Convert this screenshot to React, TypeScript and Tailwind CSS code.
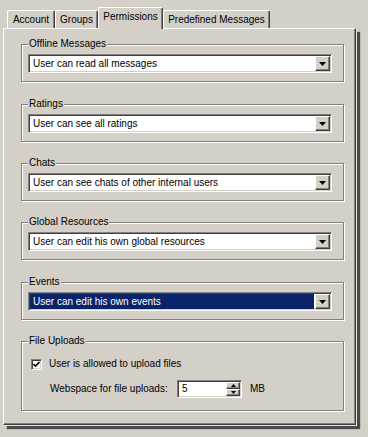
import React from 'react';

const GROUPS = [
  { title: 'Offline Messages', value: 'User can read all messages', gap: 'mt-0' },
  { title: 'Ratings', value: 'User can see all ratings', gap: 'mt-[16px]' },
  { title: 'Chats', value: 'User can see chats of other internal users', gap: 'mt-[15px]' },
  { title: 'Global Resources', value: 'User can edit his own global resources', gap: 'mt-[15px]' },
  { title: 'Events', value: 'User can edit his own events', gap: 'mt-[16px]', selected: true },
];

const raised = 'border border-t-white border-l-white border-r-[#404040] border-b-[#404040] shadow-[inset_-1px_-1px_0_#808080]';
const sunken = 'border border-t-[#808080] border-l-[#808080] border-r-white border-b-white shadow-[inset_1px_1px_0_#404040,inset_-1px_-1px_0_#d4d0c8]';

function Tab({ label, width, active }: { label: string; width: string; active?: boolean }) {
  if (active) {
    return (
      <div className={`${width} h-[22px] -mb-[1px] relative z-10 bg-[#d4d0c8] border-t border-l border-t-white border-l-white border-r border-r-[#404040] shadow-[inset_-1px_0_0_#808080] rounded-t-[2px] flex justify-center pt-[3px]`}>
        {label}
      </div>
    );
  }
  return (
    <div className={`${width} h-[18px] border-t border-l border-t-white border-l-white border-r border-r-[#404040] shadow-[inset_-1px_0_0_#808080] rounded-t-[2px] flex justify-center pt-[3px]`}>
      {label}
    </div>
  );
}

function Combo({ value, selected }: { value: string; selected?: boolean }) {
  return (
    <div className={`h-[19px] bg-white flex p-[1px] ${sunken}`}>
      <div className={`flex-1 flex items-center pl-[3px] mr-[1px] ${selected ? 'bg-[#0a246a] text-white' : ''}`}>{value}</div>
      <div className={`w-[15px] h-[15px] bg-[#d4d0c8] flex items-center justify-center ${raised}`}>
        <svg width="7" height="4" viewBox="0 0 7 4"><path d="M0 0h7L3.5 4z" fill="#000" /></svg>
      </div>
    </div>
  );
}

function Group({ title, gap, children, tall }: { title: string; gap: string; children: React.ReactNode; tall?: boolean }) {
  return (
    <fieldset className={`${gap} border border-[#808080] shadow-[inset_1px_1px_0_#fff,1px_1px_0_#fff] pl-[6px] pr-[11px] pt-[4px] ${tall ? 'pb-[12px]' : 'pb-[8px]'}`}>
      <legend className="px-[1px] bg-[#d4d0c8] leading-[12px]">{title}</legend>
      {children}
    </fieldset>
  );
}

export default function App() {
  return (
    <div className="w-[368px] h-[437px] bg-[#d4d0c8] pt-[7px] pl-[3px] text-[10px] leading-[12px] text-black" style={{ fontFamily: '"Liberation Sans", Arial, sans-serif' }}>
      <div className="flex items-end h-[21px] pl-[4px]">
        <Tab label="Account" width="w-[48px]" />
        <Tab label="Groups" width="w-[43px]" />
        <Tab label="Permissions" width="w-[65px]" active />
        <Tab label="Predefined Messages" width="w-[107px]" />
      </div>
      <div className="w-[353px] h-[397px] border border-t-white border-l-white border-r-[#404040] border-b-[#404040] shadow-[inset_-1px_-1px_0_#808080,1px_1px_0_#e4e2dc,4px_4px_1px_#4a4a4a] pl-[17px] pr-[11px] pt-[9px]">
        {GROUPS.map(g => (
          <Group key={g.title} title={g.title} gap={g.gap}>
            <Combo value={g.value} selected={g.selected} />
          </Group>
        ))}
        <Group title="File Uploads" gap="mt-[15px]" tall>
          <div className="flex items-center mt-[7px] ml-[3px] h-[12px]">
            <div className={`w-[11px] h-[11px] bg-white flex items-center justify-center ${sunken}`}>
              <svg width="7" height="7" viewBox="0 0 7 7"><path d="M0.5 3 L2.5 5 L6.5 1" stroke="#000" strokeWidth="1.6" fill="none" /></svg>
            </div>
            <span className="ml-[7px]">User is allowed to upload files</span>
          </div>
          <div className="flex items-center mt-[9px] ml-[22px] h-[19px]">
            <span className="w-[127px]">Webspace for file uploads:</span>
            <div className={`w-[65px] h-[18px] bg-white flex p-[1px] ${sunken}`}>
              <div className="flex-1 flex items-center pl-[3px]">5</div>
              <div className="w-[14px] flex flex-col">
                <div className={`flex-1 bg-[#d4d0c8] flex items-center justify-center ${raised}`}>
                  <svg width="5" height="3" viewBox="0 0 5 3"><path d="M0 3h5L2.5 0z" fill="#000" /></svg>
                </div>
                <div className={`flex-1 bg-[#d4d0c8] flex items-center justify-center ${raised}`}>
                  <svg width="5" height="3" viewBox="0 0 5 3"><path d="M0 0h5L2.5 3z" fill="#000" /></svg>
                </div>
              </div>
            </div>
            <span className="ml-[8px]">MB</span>
          </div>
        </Group>
      </div>
    </div>
  );
}
